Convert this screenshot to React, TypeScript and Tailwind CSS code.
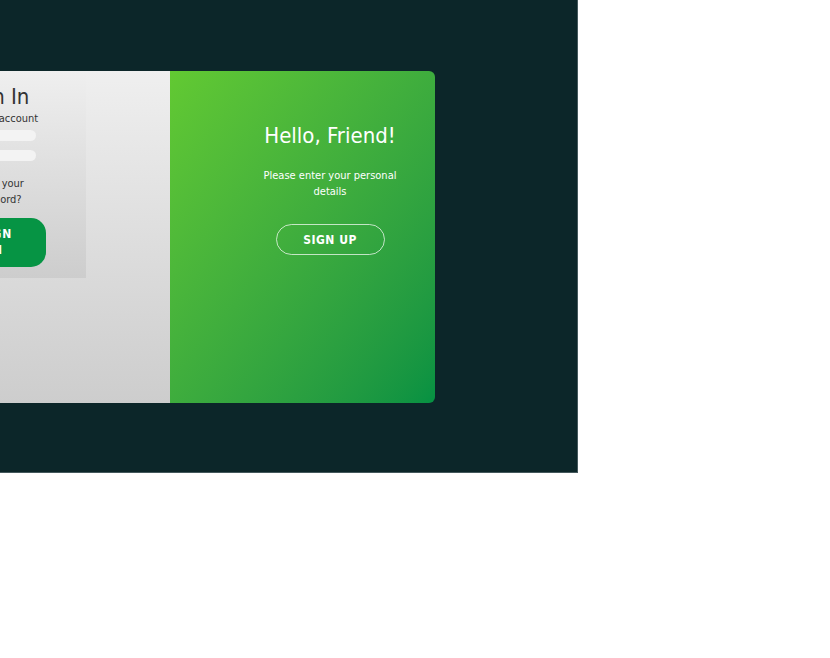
import React from 'react';

const App: React.FC = () => {
  return (
    <div className="w-[830px] h-[658px] bg-white overflow-hidden font-['DejaVu_Sans_Condensed','DejaVu_Sans',sans-serif]">
      {/* Backdrop */}
      <div className="w-[578px] h-[473px] bg-[#0c2629] border-r border-b border-[#44585c] pt-[71px] overflow-hidden">
        {/* Card */}
        <div className="ml-[-95px] w-[530px] h-[332px] flex rounded-[6px] overflow-hidden">
          {/* Sign in side */}
          <div className="w-[265px] h-full bg-linear-to-b from-[#efefef] to-[#cdcdcd]">
            <form className="w-[181px] h-[207px] bg-linear-to-b from-[#efefef] to-[#cdcdcd] flex flex-col items-center justify-center text-center text-[#333]">
              <h1 className="text-[22px] leading-[28px]">Sign In</h1>
              <span className="text-[11px] leading-[16px]">use your account</span>
              <input
                type="email"
                aria-label="Email"
                className="mt-[3px] w-[80px] h-[11px] rounded-full bg-[#f3f3f3] outline-none"
              />
              <input
                type="password"
                aria-label="Password"
                className="mt-[9px] w-[80px] h-[11px] rounded-full bg-[#f3f3f3] outline-none"
              />
              <a href="#" className="mt-[15px] w-[80px] text-[11px] leading-[16px]">
                Forgot your password?
              </a>
              <button
                type="button"
                className="mt-[10px] w-[100px] h-[49px] px-[25px] rounded-[15px] bg-[#069444] text-white text-[12px] leading-[16px] font-bold tracking-[1px]"
              >
                SIGN IN
              </button>
            </form>
          </div>

          {/* Overlay side */}
          <div className="w-[265px] h-full bg-linear-to-br from-[#62c932] to-[#059142] pl-[85px] pr-[30px] pt-[52px] flex flex-col items-center text-center text-white">
            <h1 className="text-[22px] leading-[26px]">Hello, Friend!</h1>
            <p className="mt-[19px] text-[11px] leading-[16px]">Please enter your personal details</p>
            <button
              type="button"
              className="mt-[24px] w-[109px] h-[31px] flex items-center justify-center rounded-full border border-white/70 text-[12px] font-bold tracking-[0.5px]"
            >
              SIGN UP
            </button>
          </div>
        </div>
      </div>
    </div>
  );
};

export default App;
